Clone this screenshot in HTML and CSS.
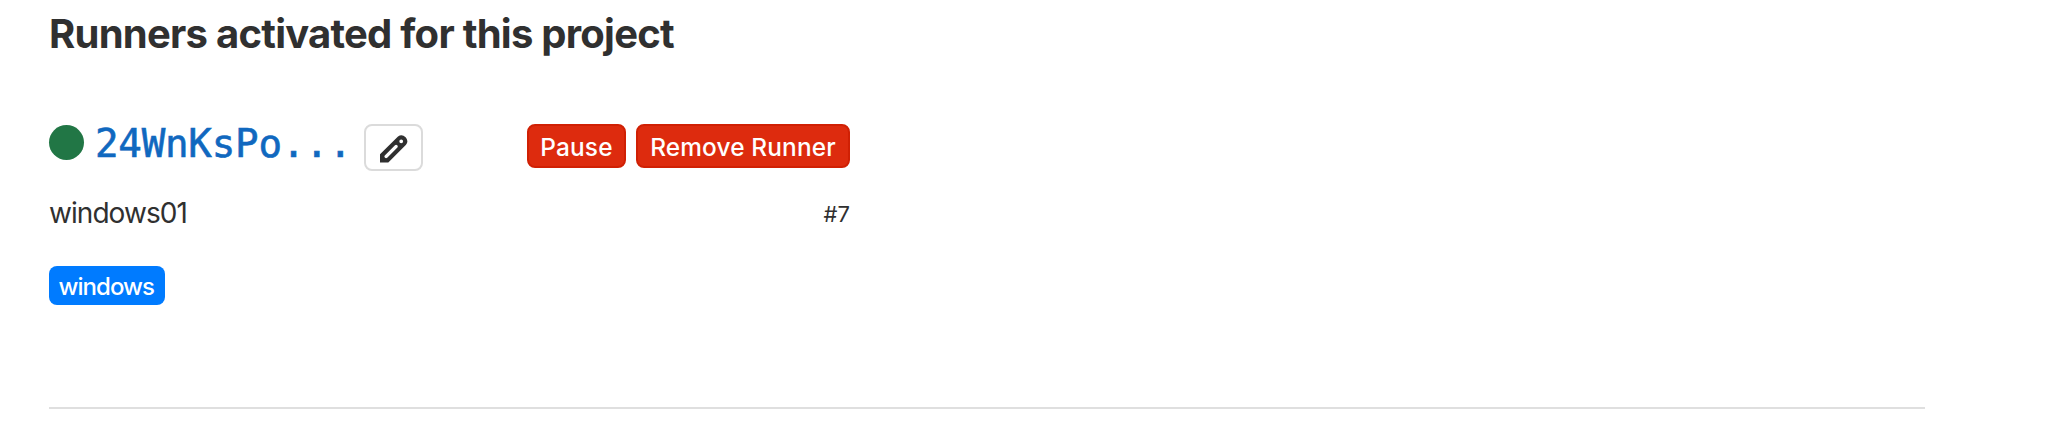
FILE: index.html
```html
<!DOCTYPE html>
<html lang="en">
<head>
<meta charset="utf-8">
<title>Runners</title>
<link rel="stylesheet" href="styles.css">
</head>
<body>
<main class="runners">
  <h4 class="title"><span>Runners activated for this project</span></h4>
  <section class="runner">
    <div class="runner-head">
      <span class="status"></span>
      <a class="token"><span>24WnKsPo...</span></a>
      <button class="edit" aria-label="Edit">
        <svg viewBox="0 0 28 28" width="28" height="28"><path fill="#303030" fill-rule="evenodd" d="M0 27.6V19.2L18 1.5Q21.8-1.3 25.6 2.2Q29 6 26 9.8L8.3 27.6ZM4.8 20.4Q3.9 21.8 5 22.7Q6 23.6 7.2 22.7L17.4 12.4Q18.2 11.2 17.2 10.3Q16.2 9.4 15 10.2ZM21.2 4.4A1.9 1.9 0 1 0 21.2 8.2A1.9 1.9 0 1 0 21.2 4.4Z"/></svg>
      </button>
      <div class="actions">
        <button class="btn pause"><span>Pause</span></button>
        <button class="btn remove"><span>Remove Runner</span></button>
      </div>
    </div>
    <div class="runner-info">
      <span class="name">windows01</span>
      <span class="number">#7</span>
    </div>
    <span class="tag"><span>windows</span></span>
  </section>
</main>
</body>
</html>
```
FILE: styles.css
```css
* { box-sizing: border-box; }
body {
  margin: 0;
  background: #fff;
  color: #303030;
  font-family: Inter, "Liberation Sans", sans-serif;
}
.runners { padding: 10px 123px 0 49px; }
.title {
  margin: 0;
  font-size: 40px;
  line-height: 48px;
  font-weight: 700;
  letter-spacing: -0.75px;
  white-space: nowrap;
}
.runner {
  margin-top: 66px;
  height: 285px;
  border-bottom: 2px solid #dfdfdf;
}
.runner-head {
  display: flex;
  align-items: flex-start;
  width: 801px;
  height: 47px;
}
.status {
  width: 35px;
  height: 35px;
  margin-top: 1px;
  border-radius: 50%;
  background: #217645;
}
.token {
  width: 269px;
  margin-left: 11px;
  color: #1068bf;
  font: 39.2px/40px "DejaVu Sans Mono", monospace;
  letter-spacing: -0.25px;
  -webkit-text-stroke: 0.6px #1068bf;
}
.edit {
  display: flex;
  width: 59px;
  height: 47px;
  padding: 9px 0 0 14px;
  border: 2px solid #dbdbdb;
  border-radius: 8px;
  background: #fff;
}
.actions {
  display: flex;
  gap: 10px;
  margin-left: auto;
}
.btn {
  height: 44px;
  padding: 1px 0 0;
  border: 2px solid #d02004;
  border-radius: 8px;
  background: #dd2b0e;
  color: #fff;
  font: 500 24.4px/40px Inter, sans-serif;
  letter-spacing: 0.15px;
  text-align: center;
  white-space: nowrap;
}
.pause { width: 99px; }
.remove { width: 214px; }
.runner-info {
  display: flex;
  justify-content: space-between;
  width: 801px;
  margin-top: 24px;
  line-height: 36px;
}
.name { font-size: 28px; letter-spacing: -0.95px; }
.number { font-size: 22px; line-height: 38px; }
.tag {
  display: block;
  width: 115.5px;
  height: 39px;
  margin-top: 33px;
  padding-right: 1px;
  border-radius: 8px;
  background: #007bff;
  color: #fff;
  font-size: 24px;
  font-weight: 500;
  letter-spacing: -0.95px;
  line-height: 41px;
  text-align: center;
}
```
